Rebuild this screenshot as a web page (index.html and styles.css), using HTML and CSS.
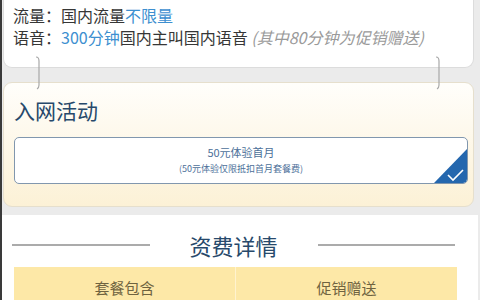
FILE: index.html
```html
<!DOCTYPE html>
<html lang="zh-CN">
<head>
    <meta charset="UTF-8">
    <meta name="viewport" content="width=device-width, initial-scale=1.0">
    <title>套餐详情</title>
    <link rel="stylesheet" href="styles.css">
</head>
<body>
    <div class="page">
        <div class="plan-card">
            <p class="plan-line">流量：国内流量<span class="hl">不限量</span></p>
            <p class="plan-line">语音：<span class="hl">300分钟</span>国内主叫国内语音 <span class="note">(其中80分钟为促销赠送)</span></p>
        </div>

        <div class="link-gap">
            <svg class="clip clip-left" width="8" height="34" viewBox="0 0 8 34">
                <path d="M2 1 Q5 1 5 5 L5 29 Q5 32 3 33" fill="none" stroke="#a8a8a8" stroke-width="1.2"/>
            </svg>
            <svg class="clip clip-right" width="8" height="34" viewBox="0 0 8 34">
                <path d="M2 1 Q5 1 5 5 L5 29 Q5 32 3 33" fill="none" stroke="#a8a8a8" stroke-width="1.2"/>
            </svg>
        </div>

        <div class="promo-card">
            <h2 class="promo-title">入网活动</h2>
            <div class="promo-option">
                <div class="promo-name">50元体验首月</div>
                <div class="promo-desc">(50元体验仅限抵扣首月套餐费)</div>
                <svg class="promo-check" width="33" height="34" viewBox="0 0 33 34">
                    <path d="M0 34 L33 0 L33 30 Q33 34 29 34 Z" fill="#2467ae"/>
                    <path d="M14 26 L19 31 L29 21" fill="none" stroke="#fff" stroke-width="1.6"/>
                </svg>
            </div>
        </div>

        <div class="fee-section">
            <div class="fee-head">
                <span class="fee-rule"></span>
                <h2 class="fee-title">资费详情</h2>
                <span class="fee-rule"></span>
            </div>
            <div class="fee-table">
                <div class="fee-cell">套餐包含</div>
                <div class="fee-cell">促销赠送</div>
            </div>
        </div>
    </div>
</body>
</html>
```

FILE: styles.css
```css
body {
    margin: 0;
    padding: 0;
    background-color: #ebebeb;
    font-family: "Noto Sans CJK SC", "Noto Sans", sans-serif;
    overflow: hidden;
}

.page {
    width: 478px;
    height: 300px;
    border-left: 2px solid #3a3a3a;
    box-sizing: border-box;
    display: flex;
    flex-direction: column;
    overflow: hidden;
}

.page > * {
    flex-shrink: 0;
}

.plan-card {
    width: 471px;
    height: 68px;
    box-sizing: border-box;
    margin-left: 1px;
    padding: 4px 0 0 9px;
    background-color: #fff;
    border: 1px solid #dcdcdc;
    border-top: none;
    border-radius: 0 0 9px 9px;
}

.plan-line {
    margin: 0;
    font-size: 16px;
    line-height: 22px;
    color: #363636;
}

.hl {
    color: #3d8fd0;
}

.note {
    color: #9a9a9a;
    font-style: italic;
}

.link-gap {
    height: 14px;
    position: relative;
}

.clip {
    position: absolute;
    top: -12px;
}

.clip-left {
    left: 32px;
}

.clip-right {
    left: 432px;
}

.promo-card {
    width: 471px;
    height: 125px;
    box-sizing: border-box;
    margin-left: 1px;
    padding: 12px 5px 0 10px;
    background: linear-gradient(to bottom, #fffefb, #fcf1d6);
    border: 1px solid #e6dfcd;
    border-radius: 9px;
}

.promo-title {
    margin: 0 0 12px;
    font-size: 21px;
    line-height: 30px;
    font-weight: normal;
    color: #27496b;
}

.promo-option {
    position: relative;
    height: 47px;
    box-sizing: border-box;
    padding-top: 6px;
    background-color: #fff;
    border: 1px solid #8197ae;
    border-radius: 5px;
    text-align: center;
    color: #4c7099;
    overflow: hidden;
}

.promo-name {
    font-size: 11px;
    line-height: 16px;
}

.promo-desc {
    font-size: 9px;
    line-height: 17px;
}

.promo-check {
    position: absolute;
    right: 0;
    bottom: 0;
}

.fee-section {
    flex: 1;
    margin-top: 8px;
    background-color: #fff;
    padding: 14px 0 0 10px;
}

.fee-head {
    display: flex;
    align-items: center;
    width: 443px;
    margin-bottom: 6px;
}

.fee-rule {
    flex: 1;
    height: 2px;
    background-color: #ababab;
}

.fee-title {
    margin: 0 40px;
    font-size: 22px;
    line-height: 32px;
    font-weight: normal;
    color: #27496b;
}

.fee-table {
    display: flex;
    width: 443px;
    margin-left: 2px;
    background-color: #fde8a7;
}

.fee-cell {
    flex: 1;
    height: 40px;
    line-height: 42px;
    text-align: center;
    font-size: 15px;
    color: #6f6340;
}

.fee-cell + .fee-cell {
    border-left: 1px solid #fff3cf;
}
```
